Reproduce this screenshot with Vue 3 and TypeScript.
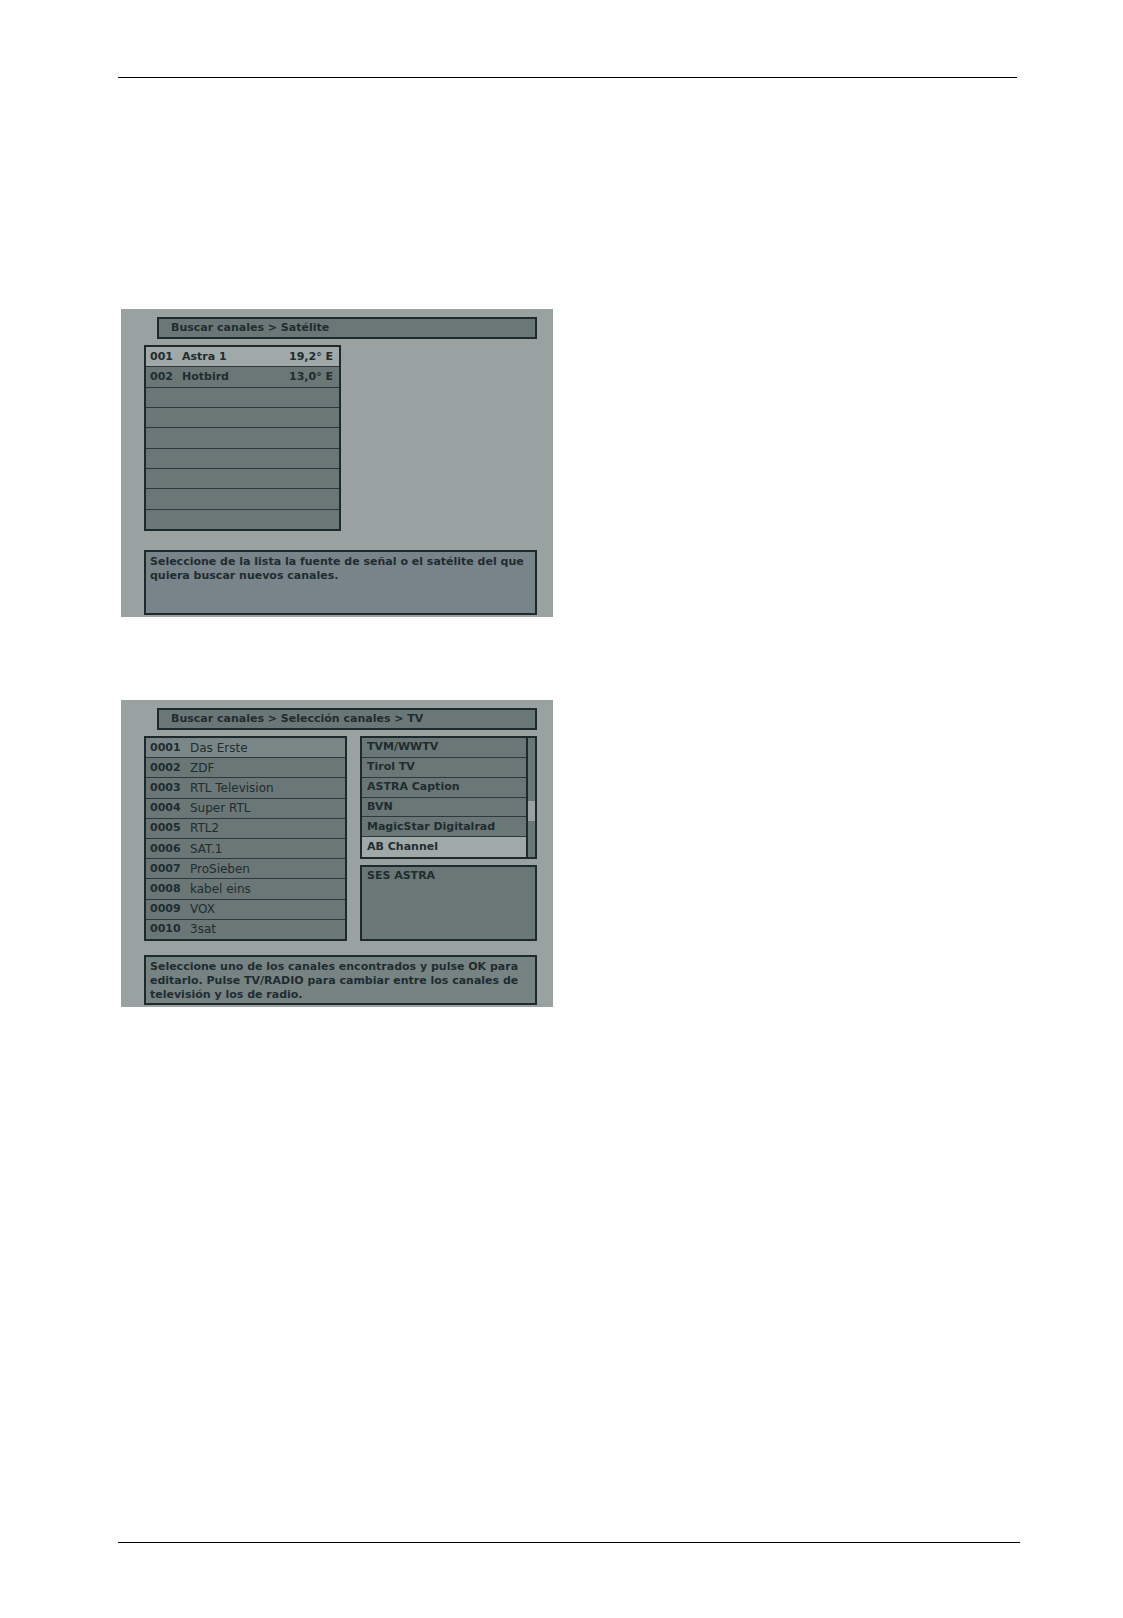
<script setup lang="ts">
interface Satellite {
  id: string
  name: string
  position: string
}

interface Channel {
  id: string
  name: string
}

const satelliteRows = 9
const satellites: Satellite[] = [
  { id: '001', name: 'Astra 1', position: '19,2° E' },
  { id: '002', name: 'Hotbird', position: '13,0° E' },
]
const emptyRows = satelliteRows - satellites.length

const channels: Channel[] = [
  { id: '0001', name: 'Das Erste' },
  { id: '0002', name: 'ZDF' },
  { id: '0003', name: 'RTL Television' },
  { id: '0004', name: 'Super RTL' },
  { id: '0005', name: 'RTL2' },
  { id: '0006', name: 'SAT.1' },
  { id: '0007', name: 'ProSieben' },
  { id: '0008', name: 'kabel eins' },
  { id: '0009', name: 'VOX' },
  { id: '0010', name: '3sat' },
]

const found: string[] = [
  'TVM/WWTV',
  'Tirol TV',
  'ASTRA Caption',
  'BVN',
  'MagicStar Digitalrad',
  'AB Channel',
]
const selected = 'AB Channel'
</script>

<template>
  <div class="page">
    <hr class="rule rule-top" />

    <main class="content">
      <section class="screen">
        <h2 class="title">Buscar canales &gt; Satélite</h2>
        <table class="box grid satellites">
          <tbody>
            <tr v-for="(s, i) in satellites" :key="s.id" :class="{ selected: i === 0 }">
              <td class="sat-id">{{ s.id }}</td>
              <td>{{ s.name }}</td>
              <td class="position">{{ s.position }}</td>
            </tr>
            <tr v-for="n in emptyRows" :key="n">
              <td colspan="3"></td>
            </tr>
          </tbody>
        </table>
        <p class="box help help-satellite">
          Seleccione de la lista la fuente de señal o el satélite del que quiera buscar nuevos canales.
        </p>
      </section>

      <section class="screen">
        <h2 class="title">Buscar canales &gt; Selección canales &gt; TV</h2>
        <div class="columns">
          <table class="box grid channels">
            <tbody>
              <tr v-for="(c, i) in channels" :key="c.id" :class="{ current: i === 0 }">
                <td class="channel-id">{{ c.id }}</td>
                <td class="channel-name">{{ c.name }}</td>
              </tr>
            </tbody>
          </table>
          <div class="side">
            <div class="box found">
              <ul class="found-list">
                <li v-for="name in found" :key="name" :class="{ selected: name === selected }">{{ name }}</li>
              </ul>
              <div class="track"><div class="thumb"></div></div>
            </div>
            <div class="box info">SES ASTRA</div>
          </div>
        </div>
        <p class="box help help-channels">
          Seleccione uno de los canales encontrados y pulse OK para editarlo. Pulse TV/RADIO para cambiar entre los canales de televisión y los de radio.
        </p>
      </section>
    </main>

    <hr class="rule" />
  </div>
</template>

<style>
body {
  margin: 0;
  background: #fff;
}
</style>

<style scoped>
.page {
  box-sizing: border-box;
  min-height: 100vh;
  padding: 77px 103px 75px 118px;
  display: flex;
  flex-direction: column;
  font-family: "DejaVu Sans", Verdana, sans-serif;
  font-size: 11px;
  font-weight: 700;
  line-height: 14px;
  color: #1e2d30;
}

.rule {
  width: 100%;
  height: 1px;
  margin: 0;
  border: 0;
  background: #000;
}

.rule-top {
  width: auto;
  margin-right: 3px;
}

.content {
  flex: 1;
  display: flex;
  flex-direction: column;
  gap: 83px;
  padding: 231px 3px 0;
}

.screen {
  box-sizing: border-box;
  width: 100%;
  max-width: 432px;
  padding: 8px 16px 2px 23px;
  display: flex;
  flex-direction: column;
  background: #9aa2a1;
}

.box,
.title {
  box-sizing: border-box;
  margin: 0;
  border: 2px solid #1c2a2d;
  background: #6b7676;
}

.title {
  height: 22px;
  margin: 0 0 6px 13px;
  padding: 0 12px;
  font-size: 11px;
  line-height: 18px;
}

.grid {
  border-collapse: separate;
  border-spacing: 0;
}

.grid td {
  height: 19px;
  padding: 0 0 0 4px;
  border-bottom: 1px solid #2c3a3d;
  white-space: nowrap;
}

.grid tr:last-child td {
  border-bottom: 0;
}

.satellites {
  width: 197px;
  height: 186px;
}

.sat-id {
  width: 28px;
}

.grid .position {
  padding-right: 6px;
  text-align: right;
}

.selected {
  background: #a0a8a8;
}

.current {
  background: #7b8686;
}

.help {
  padding: 3px 4px 0;
  background: #79838a;
}

.help-satellite {
  height: 65px;
  margin-top: 19px;
}

.help-channels {
  height: 50px;
  margin-top: 14px;
  background: #778283;
}

.columns {
  display: flex;
  gap: 13px;
}

.channels {
  width: 203px;
  height: 205px;
}

.channel-id {
  width: 36px;
}

.channel-name {
  font-size: 12px;
  font-weight: 400;
}

.side {
  flex: 1;
  display: flex;
  flex-direction: column;
  gap: 6px;
}

.found {
  height: 123px;
  display: flex;
}

.found-list {
  flex: 1;
  display: grid;
  grid-auto-rows: 1fr;
  margin: 0;
  padding: 0;
  list-style: none;
}

.found-list li {
  display: flex;
  align-items: center;
  padding-left: 5px;
  border-bottom: 1px solid #2c3a3d;
}

.found-list li:last-child {
  border-bottom: 0;
}

.track {
  width: 7px;
  border-left: 2px solid #1c2a2d;
}

.thumb {
  height: 20px;
  margin-top: 63px;
  background: #9aa2a1;
}

.info {
  flex: 1;
  padding: 2px 5px;
}
</style>
